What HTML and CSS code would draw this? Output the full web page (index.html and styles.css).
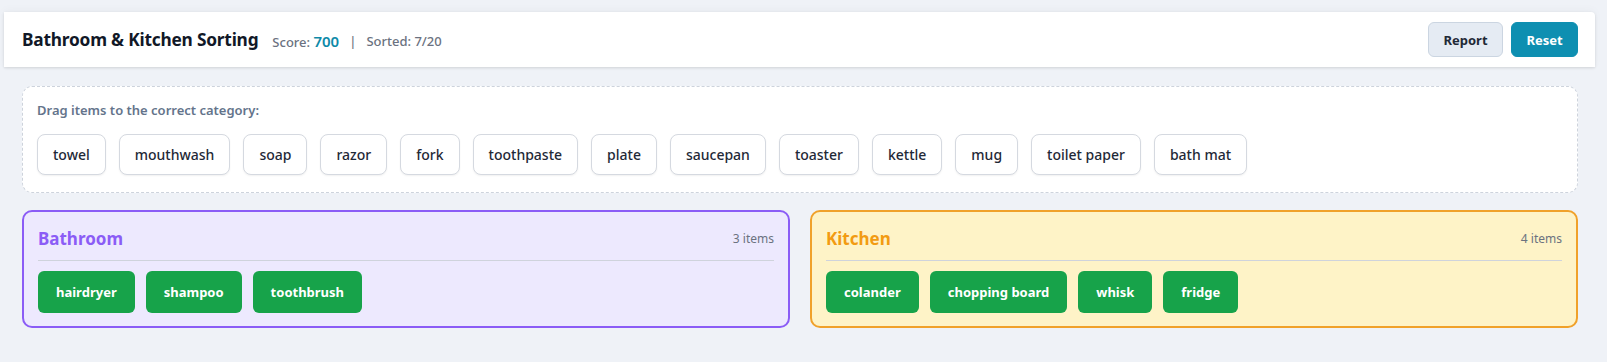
FILE: index.html
```html
<!DOCTYPE html>
<html lang="en">
<head>
    <meta charset="UTF-8">
    <meta name="viewport" content="width=device-width, initial-scale=1.0">
    <title>Bathroom &amp; Kitchen Sorting</title>
    <link rel="stylesheet" href="styles.css">
</head>
<body>
    <div class="app">
        <header class="topbar">
            <div class="title-group">
                <h1>Bathroom &amp; Kitchen Sorting</h1>
                <div class="stats">
                    <span>Score: <b class="score">700</b></span>
                    <span class="sep">|</span>
                    <span>Sorted: 7/20</span>
                </div>
            </div>
            <div class="actions">
                <button class="btn btn-light">Report</button>
                <button class="btn btn-primary">Reset</button>
            </div>
        </header>

        <main class="content">
            <section class="pool">
                <p class="pool-label">Drag items to the correct category:</p>
                <div class="chips">
                    <div class="chip">towel</div>
                    <div class="chip">mouthwash</div>
                    <div class="chip">soap</div>
                    <div class="chip">razor</div>
                    <div class="chip">fork</div>
                    <div class="chip">toothpaste</div>
                    <div class="chip">plate</div>
                    <div class="chip">saucepan</div>
                    <div class="chip">toaster</div>
                    <div class="chip">kettle</div>
                    <div class="chip">mug</div>
                    <div class="chip">toilet paper</div>
                    <div class="chip">bath mat</div>
                </div>
            </section>

            <div class="categories">
                <section class="category bathroom">
                    <div class="category-head">
                        <h2>Bathroom</h2>
                        <span class="count">3 items</span>
                    </div>
                    <div class="chips sorted-list">
                        <div class="chip sorted">hairdryer</div>
                        <div class="chip sorted">shampoo</div>
                        <div class="chip sorted">toothbrush</div>
                    </div>
                </section>
                <section class="category kitchen">
                    <div class="category-head">
                        <h2>Kitchen</h2>
                        <span class="count">4 items</span>
                    </div>
                    <div class="chips sorted-list">
                        <div class="chip sorted">colander</div>
                        <div class="chip sorted">chopping board</div>
                        <div class="chip sorted">whisk</div>
                        <div class="chip sorted">fridge</div>
                    </div>
                </section>
            </div>
        </main>
    </div>
</body>
</html>
```

FILE: styles.css
```css
body {
    margin: 0;
    background-color: #eff2f7;
    font-family: "Noto Sans", "Open Sans", Arial, sans-serif;
    color: #1f2937;
}
.app {
    width: 1600px;
    padding-top: 12px;
}

/* Top bar */
.topbar {
    margin: 0 5px 0 4px;
    height: 55px;
    padding: 0 17px 0 18px;
    background-color: white;
    display: flex;
    align-items: center;
    justify-content: space-between;
    box-shadow: 0 1px 3px rgba(0, 0, 0, 0.12), 0 -2px 10px rgba(0, 0, 0, 0.03);
    border-radius: 0 4px 0 0;
}
.title-group {
    display: flex;
    align-items: center;
    gap: 14px;
}
.topbar h1 {
    margin: 0;
    font-size: 17.3px;
    font-weight: 700;
    color: #111827;
    letter-spacing: -0.2px;
}
.stats {
    display: flex;
    align-items: center;
    gap: 8px;
    font-size: 13px;
    font-weight: 500;
    color: #6b7280;
    padding-top: 2px;
}
.stats .sep {
    margin: 0 2px;
}
.score {
    color: #0e8aa8;
    font-size: 15px;
    font-weight: 600;
}
.actions {
    display: flex;
    gap: 8px;
}
.btn {
    height: 35px;
    border-radius: 6px;
    font-family: inherit;
    font-size: 13px;
    font-weight: 700;
    cursor: pointer;
}
.btn-light {
    width: 75px;
    background-color: #e5ebf3;
    border: 1px solid #cbd5e1;
    color: #1f2937;
}
.btn-primary {
    width: 67px;
    background-color: #0e8fb1;
    border: 1px solid #0e8fb1;
    color: white;
}

/* Main */
.content {
    padding: 19px 22px 0 22px;
}
.pool {
    background-color: white;
    border: 1px dashed #cdd3dc;
    border-radius: 10px;
    padding: 14px 14px 17px;
}
.pool-label {
    margin: 0 0 15px;
    font-size: 13px;
    font-weight: 600;
    color: #64748b;
}
.chips {
    display: flex;
    flex-wrap: wrap;
    gap: 13px;
}
.chip {
    height: 41px;
    box-sizing: border-box;
    padding: 0 15px;
    display: flex;
    align-items: center;
    border: 1px solid #d5d9e0;
    border-radius: 8px;
    background-color: white;
    font-size: 14px;
    font-weight: 500;
    color: #1f2937;
    box-shadow: 0 1px 2px rgba(0, 0, 0, 0.06);
}
.sorted-list {
    gap: 11px;
}
.chip.sorted {
    height: 42px;
    padding: 0 18px;
    border: none;
    border-radius: 6px;
    background-color: #17a34a;
    color: white;
    font-size: 13px;
    font-weight: 700;
    box-shadow: none;
}

/* Categories */
.categories {
    display: grid;
    grid-template-columns: 1fr 1fr;
    gap: 20px;
    margin-top: 17px;
}
.category {
    border: 2px solid;
    border-radius: 10px;
    padding: 15px 14px 13px;
}
.category.bathroom {
    border-color: #8b5cf6;
    background-color: #ede9fe;
}
.category.kitchen {
    border-color: #f0a12a;
    background-color: #fef3c7;
}
.category-head {
    display: flex;
    align-items: center;
    justify-content: space-between;
    padding-bottom: 10px;
    margin-bottom: 10px;
    border-bottom: 1px solid #cfd3dc;
}
.category h2 {
    margin: 0;
    font-size: 17px;
    font-weight: 700;
}
.bathroom h2 {
    color: #8b5cf6;
}
.kitchen h2 {
    color: #f29b12;
}
.count {
    font-size: 12px;
    color: #6b7280;
}
```
